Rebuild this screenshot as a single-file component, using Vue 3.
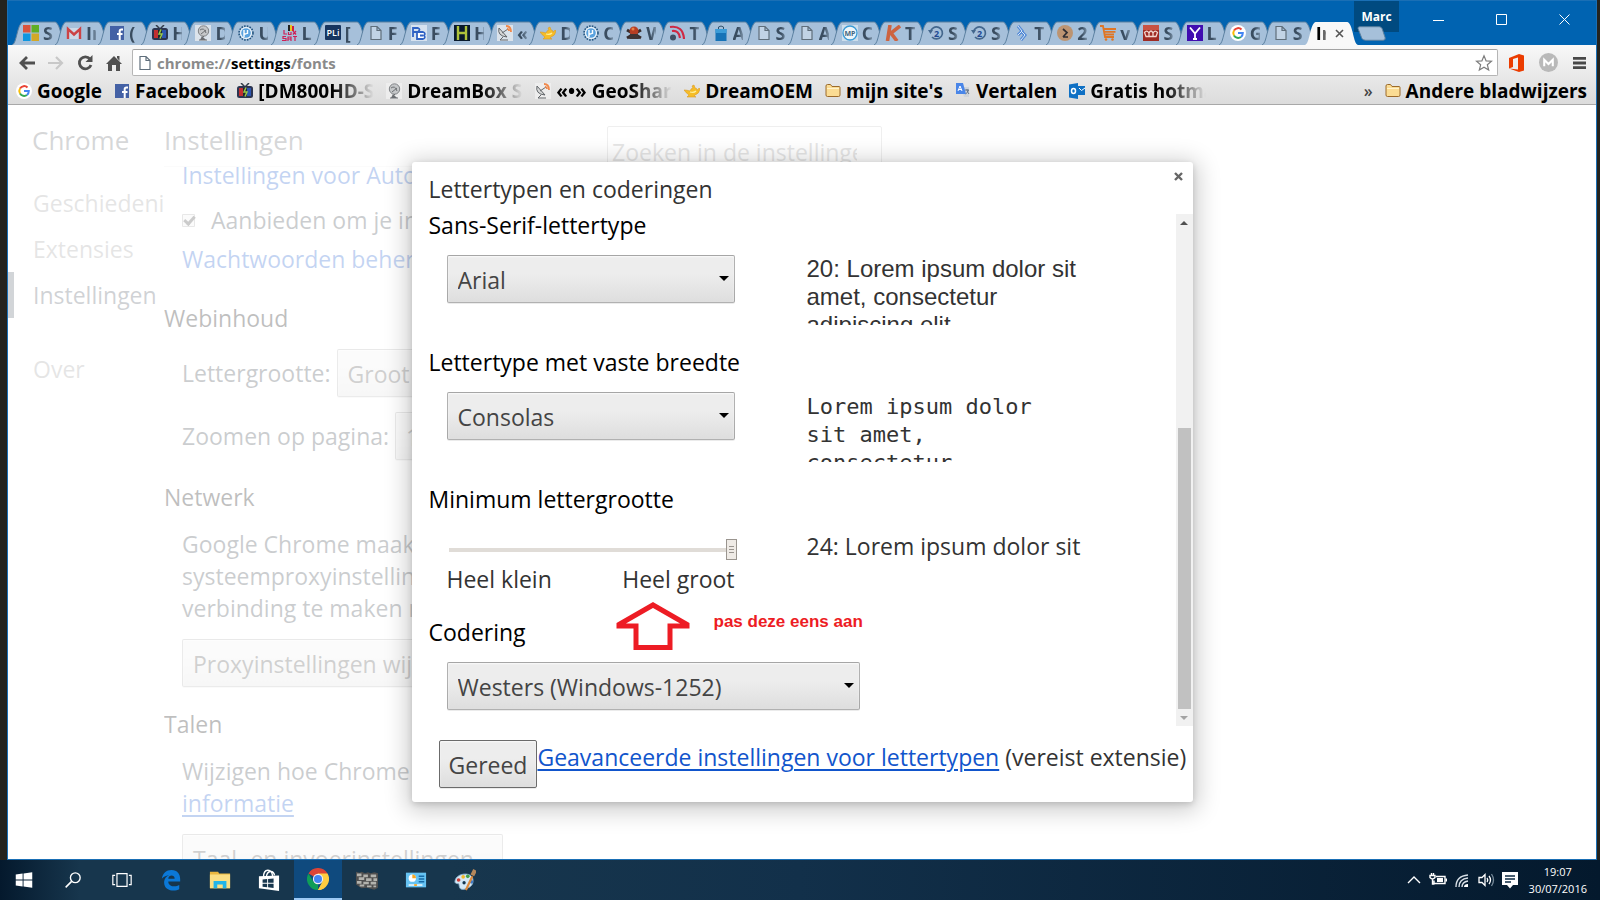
<script setup>
import { ref } from 'vue'

const tabs = [
  { icon: 'windows', title: 'S' },
  { icon: 'gmail', title: 'In' },
  { icon: 'facebook', title: '(' },
  { icon: 'tv', title: 'H' },
  { icon: 'dish', title: 'D' },
  { icon: 'gear', title: 'U' },
  { icon: 'luxsat', title: 'L' },
  { icon: 'pli', title: '[' },
  { icon: 'page', title: 'F' },
  { icon: 'board', title: 'F' },
  { icon: 'h', title: 'H' },
  { icon: 'satellite', title: '«' },
  { icon: 'lamp', title: 'D' },
  { icon: 'gear', title: 'C' },
  { icon: 'skull', title: 'W' },
  { icon: 'feed', title: 'T' },
  { icon: 'bag', title: 'A' },
  { icon: 'page', title: 'S' },
  { icon: 'page', title: 'A' },
  { icon: 'mp', title: 'C' },
  { icon: 'k', title: 'T' },
  { icon: 'history', title: 'S' },
  { icon: 'history', title: 'S' },
  { icon: 'chevrons', title: 'T' },
  { icon: 'coin', title: '2' },
  { icon: 'cart', title: 'v' },
  { icon: 'crown', title: 'S' },
  { icon: 'yahoo', title: 'L' },
  { icon: 'google', title: 'G' },
  { icon: 'page', title: 'S' }
]

const bookmarks = [
  { icon: 'google', title: 'Google' },
  { icon: 'facebook', title: 'Facebook' },
  { icon: 'tv', title: '[DM800HD-S', fade: true },
  { icon: 'dish', title: 'DreamBox Sa', fade: true },
  { icon: 'satellite', title: '«•» GeoShare', fade: true },
  { icon: 'lamp', title: 'DreamOEM' },
  { icon: 'folder', title: "mijn site's" },
  { icon: 'translate', title: 'Vertalen' },
  { icon: 'outlook', title: 'Gratis hotmail', fade: true }
]

const taskbar = [
  { icon: 't-start', label: 'Start' },
  { icon: 't-search', label: 'Zoeken' },
  { icon: 't-view', label: 'Taakweergave' },
  { icon: 't-edge', label: 'Edge' },
  { icon: 't-explorer', label: 'Verkenner' },
  { icon: 't-store', label: 'Store' },
  { icon: 't-chrome', label: 'Chrome', active: true },
  { icon: 't-wall', label: 'Firewall' },
  { icon: 't-panel', label: 'Configuratiescherm' },
  { icon: 't-paint', label: 'Paint' }
]

const tray = ['s-up', 's-battery', 's-wifi', 's-volume', 's-action']

const sansFont = ref('Arial')
const fixedFont = ref('Consolas')
const minSize = ref(24)
const encoding = ref('Westers (Windows-1252)')
</script>

<template>
  <div class="desktop">
    <svg class="sprite" aria-hidden="true">
      <symbol id="windows" viewBox="0 0 16 16">
        <path fill="#d9533c" d="M0 0h7.500v7.500H0z" /><path fill="#5fae26" d="M8.500 0H16v7.500H8.500z" />
        <path fill="#0d96e0" d="M0 8.500h7.500V16H0z" /><path fill="#d3a827" d="M8.500 8.500H16V16H8.500z" />
      </symbol>
      <symbol id="gmail" viewBox="0 0 16 16">
        <path fill="#e6eaf0" fill-opacity=".6" d="M1 3h14v11H1z" />
        <path fill="none" stroke="#cc4345" stroke-width="2.400" d="M2 14V4l6 5.500L14 4v10" />
      </symbol>
      <symbol id="facebook" viewBox="0 0 16 16">
        <rect x="1" y="1" width="14" height="14" fill="#4461a5" />
        <path fill="none" stroke="#fff" stroke-width="2" d="M14 4.500h-1.500q-1.800 0-1.800 1.800V15M8 9h5.500" />
      </symbol>
      <symbol id="tv" viewBox="0 0 16 16">
        <path fill="none" stroke="#333c48" stroke-width="1.500" d="M4 0l4 4 4-4" />
        <rect x="0" y="3" width="16" height="12" rx="2.500" fill="#2c3550" />
        <path fill="#c22f31" d="M2 5h4v8H2z" /><path fill="#1d2a2c" d="M6 5h4v8H6z" /><path fill="#2d56b0" d="M10 5h4v8h-4z" />
        <path fill="none" stroke="#9bc94a" stroke-width="1.500" d="M9 4.500L7 9h3l-2 4.500" />
      </symbol>
      <symbol id="dish" viewBox="0 0 16 16">
        <path fill="#f2f2f2" fill-opacity=".7" d="M0 0h16v16H0z" />
        <circle cx="8.500" cy="6" r="5.200" fill="#c5c7c9" stroke="#808386" />
        <path fill="none" stroke="#6c6f72" d="M5 5q4-3 6 3M6 9l5-4M9 11l-3 3M4 15h8" />
        <path fill="#6b6e72" d="M7 11l4 4H5z" />
      </symbol>
      <symbol id="gear" viewBox="0 0 16 16">
        <circle cx="8" cy="8" r="7" fill="none" stroke="#1d4f7b" stroke-width="1.500" stroke-dasharray="1.600 1.200" />
        <circle cx="8" cy="8" r="6" fill="#f2f8fc" />
        <circle cx="8" cy="8" r="4.800" fill="#5aa2de" />
        <path fill="none" stroke="#fff" stroke-width="1.400" d="M6 12V5M6 8q1 2 3.500 0V5v4" />
      </symbol>
      <symbol id="luxsat" viewBox="0 0 16 16">
        <path fill="#222" d="M6 0h2v6H6z" /><path fill="#e9c623" d="M8 0h2v6H8z" /><path fill="#d31f3c" d="M10 1h2v5h-2z" />
        <path fill="none" stroke="#cf1f55" stroke-width="1.200" d="M2 5v4h3M6.500 7v2.500h2.500V7M11 6l3 3.500M14 6l-3 3.500M4 11.500H1v2h3v2H0M6 16v-4h3v4M6 14h3M11 11.500h4M13 11.500V16" />
      </symbol>
      <symbol id="pli" viewBox="0 0 16 16">
        <rect width="16" height="15" rx="1" fill="#17355f" />
        <text x="8" y="11" text-anchor="middle" font-family="Open Sans" font-size="9" font-weight="600" fill="#fff">PLi</text>
      </symbol>
      <symbol id="page" viewBox="0 0 16 16">
        <path fill="#fff" fill-opacity=".3" stroke="#5f6e7b" stroke-width="1.200" d="M3 1.500h6L13 5.500v9H3zM9 1.500v4h4" />
      </symbol>
      <symbol id="board" viewBox="0 0 16 16">
        <path fill="#e5edf6" fill-opacity=".75" d="M0 0h16v16H0z" />
        <path fill="none" stroke="#2f62c4" stroke-width="1.800" d="M2 12V3h5q3 1 0 4H2" />
        <path fill="#fff" stroke="#2f62c4" stroke-width="1.800" d="M6 7h6q3 1 1 3.500 2 2.500-1 3.500H6zM9 10.500h3" />
      </symbol>
      <symbol id="h" viewBox="0 0 16 16">
        <path fill="#08192c" d="M0 0h16v16H0z" />
        <path fill="none" stroke="#adc23b" stroke-width="2.400" d="M4 1v14M12 1v14M4 8h8" />
      </symbol>
      <symbol id="satellite" viewBox="0 0 16 16">
        <path fill="#f2f2f2" fill-opacity=".7" d="M0 0h16v16H0z" />
        <path fill="#d7d8d8" stroke="#606468" d="M2 3q-2 8 8 9z" /><path stroke="#63676b" d="M5 8l6-4M6 12l-3 3h8" fill="none" />
        <path fill="none" stroke="#f0894c" stroke-width="1.800" d="M9 1q5 0 5 6M10 3.500q2 .5 2 2.500" />
      </symbol>
      <symbol id="lamp" viewBox="0 0 16 16">
        <path fill="#f6bd26" stroke="#dc9a22" stroke-width=".6" d="M0 7q3 0 6 1 1-3 3-3l-1-2 2-1 1 3q2 0 2 2 1 0 2-2l1 1q-1 5-5 6l-1 1 2 1H3l2-2Q2 10 0 7z" />
        <path stroke="#fff09a" stroke-width="1.200" d="M6 9q4 1 6-1" fill="none" />
      </symbol>
      <symbol id="skull" viewBox="0 0 16 16">
        <path stroke="#372c2d" stroke-width="3" d="M1 5l14 8M15 5L1 13" /><circle cx="8" cy="6" r="4.500" fill="#b73e24" /><path fill="#403536" d="M4 9h8l1 5H3z" /><circle cx="7" cy="4" r="1.500" fill="#e98246" />
      </symbol>
      <symbol id="feed" viewBox="0 0 16 16">
        <circle cx="4" cy="12.500" r="3" fill="#3f5065" />
        <path fill="none" stroke="#cf2944" stroke-width="2.200" d="M1 2q13-2 14 12M3 6q7-1 8 7" />
      </symbol>
      <symbol id="bag" viewBox="0 0 16 16">
        <path fill="none" stroke="#31516c" d="M5.500 6V2q2.500-2 5 0v3" /><path fill="#1673b7" d="M2.500 4h11v12h-11z" /><path fill="#3b9cd8" d="M2.500 4h11v4h-11z" />
      </symbol>
      <symbol id="mp" viewBox="0 0 16 16">
        <path fill="#deebf4" fill-opacity=".7" d="M0 0h16v16H0z" />
        <circle cx="8" cy="8" r="7" fill="#eef6fa" stroke="#3b9bd6" stroke-width="1.300" />
        <text x="8" y="11" text-anchor="middle" font-family="Open Sans" font-size="7" font-weight="700" fill="#44667f">MP</text>
      </symbol>
      <symbol id="k" viewBox="0 0 16 16">
        <path fill="none" stroke="#cd6340" stroke-width="3.600" d="M5 0L2.500 16M15 1L6 8l6 8" />
      </symbol>
      <symbol id="history" viewBox="0 0 16 16">
        <path fill="none" stroke="#44678d" stroke-width="1.700" d="M2.500 7a6 6 0 1 1 1.500 5" /><path fill="#44678d" d="M0 5l5 0-2.500 4z" />
        <text x="8.500" y="11.500" text-anchor="middle" font-family="Open Sans" font-size="9" font-weight="700" fill="#224a93">2</text>
      </symbol>
      <symbol id="chevrons" viewBox="0 0 16 16">
        <path fill="none" stroke="#5088d7" stroke-width="3" d="M4 1l4 5-4 4M7 6l4 4-4 5" /><path fill="none" stroke="#d9e7f5" d="M4 1l4 5-4 4M7 6l4 4-4 5" />
      </symbol>
      <symbol id="coin" viewBox="0 0 16 16">
        <circle cx="8" cy="8" r="8" fill="#bc9472" /><path fill="none" stroke="#2f2e33" stroke-width="1.700" d="M6 4l4 3.500-4 4.500M6 12h5" />
      </symbol>
      <symbol id="cart" viewBox="0 0 16 16">
        <path fill="none" stroke="#df7626" stroke-width="1.800" d="M0 1h3l2 11h9M4 4h12M4.500 6.800h11M5 9.500h9" /><circle cx="6" cy="14.500" r="1.300" fill="#df7626" /><circle cx="12.500" cy="14.500" r="1.300" fill="#df7626" />
      </symbol>
      <symbol id="crown" viewBox="0 0 16 16">
        <path fill="#9f2b24" d="M0 0h16v16H0z" /><path fill="#c85242" d="M0 0h16v5H0z" />
        <path fill="none" stroke="#f2d6cf" stroke-width="1.300" d="M3 11.500L1.500 7.500Q4 4.500 6 8q2-4 4 0 2-3.500 4.500-.5L13 11.500zM6 8v3M10 8v3" />
      </symbol>
      <symbol id="yahoo" viewBox="0 0 16 16">
        <path fill="#400db0" d="M0 0h16v16H0z" /><path fill="none" stroke="#fff" stroke-width="1.800" d="M3 2.500l5 6 5-6M8 8v6M6 14h4" />
      </symbol>
      <symbol id="google" viewBox="0 0 16 16">
        <circle cx="8" cy="8" r="8" fill="#fff" />
        <g fill="none" stroke-width="2">
          <path stroke="#ea4335" d="M4 5.500a4.800 4.800 0 0 1 7.500-1" /><path stroke="#fbbc05" d="M4 5.500a4.800 4.800 0 0 0 0 5" />
          <path stroke="#34a853" d="M4 10.500a4.800 4.800 0 0 0 7 1.500" /><path stroke="#4285f4" d="M11 12q1.800-1.500 1.800-4H8" />
        </g>
      </symbol>
      <symbol id="folder" viewBox="0 0 16 16">
        <path fill="#fbdc93" stroke="#9c6a2a" d="M1 3q0-1.500 1.500-1.500h3L7 3.500h7q1 0 1 1V12q0 1.500-1.500 1.500h-11Q1 13.500 1 12z" /><path stroke="#fff2cc" d="M2 5.500h12" />
      </symbol>
      <symbol id="translate" viewBox="0 0 16 16">
        <path fill="#cfd4da" d="M6 4h8v10H9z" /><path fill="#4a86e8" d="M1 0h7l3 11H1z" />
        <path fill="none" stroke="#fff" d="M3 8l2-5 2 5M3.500 6.500h3" /><path fill="none" stroke="#657487" d="M10 7h4M12 6v1q1 3 2 4M13.500 7q-1 3-3 4" />
      </symbol>
      <symbol id="outlook" viewBox="0 0 16 16">
        <path fill="#0f70c4" d="M0 1.500L9 0v16l-9-1.500z" /><path fill="#0f70c4" d="M9 3h7v9H9z" /><path fill="none" stroke="#fff" d="M10 5l2.500 2.500L16 5" />
        <ellipse cx="4.500" cy="8" rx="2" ry="2.500" fill="none" stroke="#fff" stroke-width="1.500" />
      </symbol>

      <symbol id="back" viewBox="0 0 18 18"><path fill="none" stroke="#505050" stroke-width="2.800" d="M17 9H4M9 3L3 9l6 6" /></symbol>
      <symbol id="forward" viewBox="0 0 18 18"><path fill="none" stroke="#c8c8c8" stroke-width="2.200" d="M1 9h13M9 3l6 6-6 6" /></symbol>
      <symbol id="reload" viewBox="0 0 18 18"><path fill="none" stroke="#505050" stroke-width="2.800" d="M14 5a6 6 0 1 0 1 6" /><path fill="#505050" d="M16.500 1v7h-7z" /></symbol>
      <symbol id="home" viewBox="0 0 18 18"><path fill="#505050" d="M9 2l8 8h-2v7h-4v-6H7v6H3v-7H1zM12 2h2.500v5L12 4z" /></symbol>
      <symbol id="star" viewBox="0 0 20 20"><path fill="#fff" stroke="#7d7d7d" stroke-width="1.300" d="M10 2l2.300 5.600 6 .4-4.600 3.900 1.500 5.900L10 14.600l-5.200 3.200 1.500-5.900L1.700 8l6-.4z" /></symbol>
      <symbol id="office" viewBox="0 0 15 18"><path fill="#eb3c00" d="M0 4L10 0l5 1.500v15L10 18 0 14.500l9 1V3.500L4 5v8l-4 1.500z" /></symbol>
      <symbol id="mega" viewBox="0 0 20 20"><circle cx="10" cy="10" r="10" fill="#b9b9b9" /><path fill="none" stroke="#fff" stroke-width="2.200" d="M5.500 14V7l4.500 4.500L14.500 7v7" /></symbol>
      <symbol id="menu" viewBox="0 0 14 14"><path stroke="#484848" stroke-width="3" d="M0 2h14M0 7h14M0 12h14" /></symbol>

      <symbol id="t-start" viewBox="0 0 24 24"><path fill="#fff" d="M3 6l7.500-1V11.500H3zM11.500 4.800L21 3.500v8h-9.500zM3 12.500h7.500V19L3 18zM11.500 12.500H21v8l-9.500-1.300z" /></symbol>
      <symbol id="t-search" viewBox="0 0 24 24"><circle cx="14.500" cy="9.500" r="5.300" fill="none" stroke="#fff" stroke-width="1.500" /><path stroke="#fff" stroke-width="1.700" d="M10.500 13.500L4 20" /></symbol>
      <symbol id="t-view" viewBox="0 0 24 24"><path fill="none" stroke="#fff" stroke-width="1.300" d="M6.500 5h11v14h-11zM4.500 7h-2.500v10h2.500M19.500 7H22v10h-2.500" /></symbol>
      <symbol id="t-edge" viewBox="0 0 24 24"><path fill="#0b78d7" d="M2 10.500C3 4.500 7 1 12.500 1 19 1 22 5.500 22 11v2.500H9c.2 6 8 6.500 12 4V22c-5 3-17 2-16.500-8 .2-3.500 2.200-6 5.500-7.300-4 .5-6.500 1.800-8 3.800zM9 10.500h7c0-4.500-6.500-4.700-7 0z" /></symbol>
      <symbol id="t-explorer" viewBox="0 0 24 24"><path fill="#eab73f" d="M1 3h9l1 2h12v16H1z" /><path fill="#fbdf84" d="M1 6h22v15H1z" /><path fill="#22b5ea" d="M5 13h14v8h-4v-4H9v4H5z" /></symbol>
      <symbol id="t-store" viewBox="0 0 24 24"><path fill="#fff" d="M1 8l22-1v17L1 21z" /><path fill="none" stroke="#fff" stroke-width="1.500" d="M6 9c0-10 9-10 10-1M9 9c1-8 8-8 9-2" /><path fill="#17364d" d="M5 11.500l5-.5v4H5zM11 11l6-.7V15h-6zM5 16h5v4l-5-.6zM11 16h6v4.700l-6-.7z" /></symbol>
      <symbol id="t-chrome" viewBox="0 0 24 24">
        <path fill="#db4437" d="M12 12L1.600 6a12 12 0 0 1 20.800 0z" /><path fill="#ffcd40" d="M12 12V6h10.400A12 12 0 0 1 12 24l5-9z" /><path fill="#0f9d58" d="M12 24A12 12 0 0 1 1.600 6L7 15l5 3z" />
        <path fill="#ffcd40" d="M17 15l-5 9c2 0 4-.5 6-2l3-6z" /><circle cx="12" cy="12" r="5.600" fill="#f1f1f1" /><circle cx="12" cy="12" r="4.400" fill="#4285f4" />
      </symbol>
      <symbol id="t-wall" viewBox="0 0 24 24">
        <path fill="#4f4f4f" d="M0 3l4 1 2-1 4 1.500 3-1 3 1 4-1 4 1v16l-4 2-8-2-6 .5L0 17z" />
        <path fill="#b2b2ad" d="M1 5h5v3H1zM8 6h5v3H8zM16 6h6v3h-6zM3 9h6v3H3zM11 10h6v3h-6zM19 10h4v3h-4zM1 13h5v3H1zM8 14h6v2.500H8zM16 14h6v3h-6zM4 17h5v2H4zM12 18h5v2h-5zM19 18h3v2h-3z" />
      </symbol>
      <symbol id="t-panel" viewBox="0 0 24 24"><path fill="#66c3f3" d="M1 4h22v16H1z" /><circle cx="8" cy="10" r="4" fill="#fff" /><path fill="#f6a623" d="M8 6a4 4 0 0 1 4 4H8z" /><path stroke="#176ba7" stroke-width="1.700" d="M15 8h6M15 11h6M15 14h6" /><path stroke="#fff" stroke-width="1.500" d="M4 17.500h15" /><path stroke="#f6a623" stroke-width="2" d="M10 17.500h3" /></symbol>
      <symbol id="t-paint" viewBox="0 0 24 24">
        <path fill="#d5e9f6" stroke="#86aecb" d="M1 14C1 8 9 4 16 6c6 2 6 10 2 13s-11 5-12 1 0-4-2-4-3-1-3-2z" />
        <circle cx="5" cy="12" r="2" fill="#cf3d37" /><circle cx="10" cy="8.500" r="2" fill="#f1b82d" /><circle cx="15" cy="8" r="2" fill="#45a147" /><circle cx="11" cy="15" r="1.800" fill="#17364d" /><circle cx="19" cy="14" r="2" fill="#3d79c9" />
        <path stroke="#dd8a3c" stroke-width="2.400" d="M13 23l7-15" /><path stroke="#b4875b" stroke-width="4.500" d="M20 7l3-6" />
      </symbol>

      <symbol id="s-up" viewBox="0 0 18 18"><path fill="none" stroke="#fff" stroke-width="1.400" d="M3 12l6-6 6 6" /></symbol>
      <symbol id="s-battery" viewBox="0 0 18 18"><path fill="none" stroke="#fff" stroke-width="1.400" d="M7 5.500h9v7H5v-3M1 4.500h5v2q-2.500 3-5 0zM2.500 2v3M4.500 2v3M3.500 8v5h2" /><path fill="#fff" d="M8 7h6v4H8zM16.500 7.500H18v3h-1.500z" /></symbol>
      <symbol id="s-wifi" viewBox="0 0 18 18"><path fill="none" stroke="#d7dfe6" stroke-width="1.400" d="M3 16Q3 5 15 4M6 16q0-8 9-9M9 16q0-5 6-6" /><path fill="#fff" d="M11 16q0-3 4-3v3z" /></symbol>
      <symbol id="s-volume" viewBox="0 0 18 18"><path fill="none" stroke="#fff" stroke-width="1.300" d="M2 6.500h3l3-3v11l-3-3H2zM10 7q1.500 2 0 4M12 5q3 4 0 8" /><path fill="none" stroke="#778a99" stroke-width="1.300" d="M14.500 3q4 6 0 12" /></symbol>
      <symbol id="s-action" viewBox="0 0 18 18"><path fill="#fff" d="M1 1h16v13h-5l-3 3.500-3-3.500H1z" /><path stroke="#0b2942" stroke-width="1.300" d="M4 5h10M4 8h10M4 11h6" /></symbol>
    </svg>

    <div class="window">
      <header class="titlebar">
        <div class="tabs">
          <div v-for="(tab, i) in tabs" :key="i" class="tab">
            <svg class="tab__shape" viewBox="0 0 55 24" preserveAspectRatio="none"><path d="M0 24C5 23 5 3 11 1H44C50 3 50 23 55 24" /></svg>
            <svg class="tab__icon"><use :href="'#' + tab.icon" /></svg>
            <span class="tab__title">{{ tab.title }}</span>
          </div>
          <div class="tab tab--active">
            <svg class="tab__shape" viewBox="0 0 55 24" preserveAspectRatio="none"><path d="M0 24C5 23 5 3 11 1H44C50 3 50 23 55 24" /></svg>
            <span class="tab__title">In</span>
            <button class="tab__close" aria-label="Tabblad sluiten"><svg viewBox="0 0 9 9"><path d="M1 1l7 7M8 1L1 8" /></svg></button>
          </div>
        </div>
        <div class="profile">
          <button class="profile__name">Marc</button>
          <button class="new-tab" aria-label="Nieuw tabblad"><svg viewBox="0 0 30 15"><path d="M1 2q0-1.500 2-1.500h20q2 0 3 2l3 9q1 3-2 3H9q-3 0-4-2z" /></svg></button>
        </div>
        <div class="controls">
          <button aria-label="Minimaliseren"><svg viewBox="0 0 11 11"><path d="M0 6.500h11" /></svg></button>
          <button aria-label="Maximaliseren"><svg viewBox="0 0 11 11"><path d="M.5.500h10v10H.5z" /></svg></button>
          <button aria-label="Sluiten"><svg viewBox="0 0 11 11"><path d="M.5.500l10 10M10.500.500l-10 10" /></svg></button>
        </div>
      </header>

      <div class="toolbar">
        <nav class="toolbar__nav">
          <button aria-label="Vorige"><svg><use href="#back" /></svg></button>
          <button aria-label="Volgende"><svg><use href="#forward" /></svg></button>
          <button aria-label="Vernieuwen"><svg><use href="#reload" /></svg></button>
          <button aria-label="Startpagina"><svg><use href="#home" /></svg></button>
        </nav>
        <div class="omnibox">
          <svg class="omnibox__page"><use href="#page" /></svg>
          <span>chrome://<b>settings</b>/fonts</span>
          <svg class="omnibox__star"><use href="#star" /></svg>
        </div>
        <div class="toolbar__extensions">
          <button aria-label="Office"><svg class="office"><use href="#office" /></svg></button>
          <button aria-label="MEGA"><svg class="mega"><use href="#mega" /></svg></button>
          <button aria-label="Menu"><svg class="menu"><use href="#menu" /></svg></button>
        </div>
      </div>

      <nav class="bookmarks">
        <a v-for="b in bookmarks" :key="b.title" href="#" class="bookmark">
          <svg><use :href="'#' + b.icon" /></svg>
          <span :class="{ fade: b.fade }">{{ b.title }}</span>
        </a>
        <span class="bookmarks__more">»</span>
        <a href="#" class="bookmark"><svg><use href="#folder" /></svg><span>Andere bladwijzers</span></a>
      </nav>

      <div class="viewport">
        <div class="page">
          <aside class="sidebar">
            <h1>Chrome</h1>
            <a href="#">Geschiedenis</a>
            <a href="#">Extensies</a>
            <a href="#" class="selected">Instellingen</a>
            <a href="#" class="about">Over</a>
          </aside>
          <main class="settings">
            <header class="settings__header">
              <h1>Instellingen</h1>
              <input type="text" placeholder="Zoeken in de instellingen" aria-label="Zoeken in de instellingen">
            </header>
            <div class="settings__scroll">
              <div class="settings__content">
                <section>
                  <a href="#">Instellingen voor Automatisch aanvullen beheren</a>
                  <label class="check"><input type="checkbox" checked><span>Aanbieden om je internetwachtwoorden op te slaan</span></label>
                  <a href="#">Wachtwoorden beheren</a>
                </section>
                <h2>Webinhoud</h2>
                <section>
                  <div class="line"><label for="size">Lettergrootte:</label><div class="select"><select id="size"><option>Groot</option></select></div></div>
                  <div class="line"><label for="zoom">Zoomen op pagina:</label><div class="select"><select id="zoom"><option>100%</option></select></div></div>
                </section>
                <h2>Netwerk</h2>
                <section>
                  <p>Google Chrome maakt gebruik van de<br>systeemproxyinstellingen van uw computer om<br>verbinding te maken met het netwerk.</p>
                  <button class="btn">Proxyinstellingen wijzigen...</button>
                </section>
                <h2>Talen</h2>
                <section>
                  <p>Wijzigen hoe Chrome talen verwerkt. Meer<br><a href="#" class="underline">informatie</a></p>
                  <button class="btn">Taal- en invoerinstellingen...</button>
                </section>
              </div>
            </div>
          </main>
        </div>

        <div class="overlay">
          <div class="dialog" role="dialog" aria-labelledby="dialog-title">
            <button class="dialog__close" aria-label="Sluiten"><svg viewBox="0 0 9 9"><path d="M1 1l7 7M8 1L1 8" /></svg></button>
            <h1 id="dialog-title">Lettertypen en coderingen</h1>
            <div class="dialog__body">
              <div class="dialog__content">
                <section>
                  <h2><label for="sans">Sans-Serif-lettertype</label></h2>
                  <div class="row">
                    <div class="select"><select id="sans" v-model="sansFont"><option>Arial</option></select></div>
                    <div class="sample sample--sans">20: Lorem ipsum dolor sit amet, consectetur adipiscing elit.</div>
                  </div>
                </section>
                <section>
                  <h2><label for="fixed">Lettertype met vaste breedte</label></h2>
                  <div class="row">
                    <div class="select"><select id="fixed" v-model="fixedFont"><option>Consolas</option></select></div>
                    <div class="sample sample--mono">Lorem ipsum dolor sit amet, consectetur adipiscing elit.</div>
                  </div>
                </section>
                <section>
                  <h2><label for="min">Minimum lettergrootte</label></h2>
                  <div class="row">
                    <div class="slider">
                      <input id="min" v-model="minSize" type="range" min="0" max="24">
                      <div class="slider__labels"><span>Heel klein</span><span>Heel groot</span></div>
                    </div>
                    <div class="sample sample--min">{{ minSize }}: Lorem ipsum dolor sit</div>
                  </div>
                </section>
                <section>
                  <h2><label for="enc">Codering</label></h2>
                  <div class="row">
                    <div class="select select--wide"><select id="enc" v-model="encoding"><option>Westers (Windows-1252)</option></select></div>
                  </div>
                </section>
              </div>
              <div class="scrollbar">
                <i class="scrollbar__up"></i>
                <div class="scrollbar__thumb"></div>
                <i class="scrollbar__down"></i>
              </div>
            </div>
            <footer>
              <button class="btn btn--focus">Gereed</button>
              <span><a href="#" class="underline">Geavanceerde instellingen voor lettertypen</a> (vereist extensie)</span>
            </footer>
            <div class="note">
              <svg viewBox="0 0 76 48"><path d="M38 3L72 22.500V24H55V45.500H21V24H4V22.500z" /></svg>
              <span>pas deze eens aan</span>
            </div>
          </div>
        </div>
      </div>
    </div>

    <footer class="taskbar">
      <button v-for="t in taskbar" :key="t.icon" class="task" :class="{ 'task--active': t.active }" :aria-label="t.label">
        <svg><use :href="'#' + t.icon" /></svg>
      </button>
      <div class="tray">
        <svg v-for="s in tray" :key="s"><use :href="'#' + s" /></svg>
        <time>19:07<br>30/07/2016</time>
      </div>
    </footer>
  </div>
</template>

<style>
html,
body {
  margin: 0;
  overflow: hidden;
}
</style>

<style scoped>
* {
  box-sizing: border-box;
}

h1,
h2,
p {
  margin: 0;
  font-weight: 400;
}

button {
  padding: 0;
  border: 0;
  background: none;
  font: inherit;
  color: inherit;
}

a {
  text-decoration: none;
}

.desktop {
  display: flex;
  flex-direction: column;
  height: 100vh;
  background: #24231e;
  font-family: "Open Sans", "Noto Sans", sans-serif;
}

.sprite {
  position: absolute;
  width: 0;
  height: 0;
}

.window {
  display: flex;
  flex: 1;
  flex-direction: column;
  min-height: 0;
  margin: 0 3px 0 7px;
  border: 1px solid #1a6fb5;
  background: #fff;
}

/* tabs */
.titlebar {
  display: flex;
  flex-shrink: 0;
  height: 44px;
  padding-left: 4px;
  background: #0063b1;
}

.tabs {
  display: flex;
  flex: 1;
  align-items: flex-end;
  min-width: 0;
}

.tab {
  position: relative;
  display: flex;
  flex: 1;
  align-items: center;
  min-width: 0;
  height: 24px;
  padding-left: 11px;
}

.tab__shape {
  position: absolute;
  top: 0;
  left: 0;
  width: calc(100% + 11px);
  height: 24px;
  fill: #a6c0da;
  stroke: #5b7f9f;
}

.tab__icon {
  position: relative;
  flex-shrink: 0;
  width: 16px;
  height: 16px;
}

.tab__title {
  position: relative;
  width: 10px;
  height: 24px;
  margin-left: 4px;
  overflow: hidden;
  font-size: 18px;
  font-weight: 700;
  line-height: 24px;
  color: #3a4d60;
  mask-image: linear-gradient(90deg, #000 50%, rgba(0, 0, 0, .4));
}

.tab--active {
  flex: 0 0 42px;
  z-index: 1;
}

.tab--active .tab__shape {
  fill: #f8f8f8;
  stroke: none;
}

.tab--active .tab__title {
  flex-shrink: 0;
  margin-left: 0;
  color: #000;
}

.tab__close {
  position: relative;
  flex-shrink: 0;
  width: 9px;
  margin-left: 9px;
  line-height: 0;
}

.tab__close svg {
  width: 9px;
  height: 9px;
  stroke: #555;
  stroke-width: 1.6;
}

.profile {
  width: 52px;
  padding-left: 7px;
}

.profile__name {
  display: block;
  width: 45px;
  height: 31px;
  background: #004a80;
  font-size: 12px;
  font-weight: 700;
  line-height: 30px;
  color: #fff;
}

.new-tab {
  position: absolute;
  top: 26px;
  margin-left: 3px;
  line-height: 0;
}

.new-tab svg {
  width: 29px;
  height: 15px;
  fill: #a6c0da;
  stroke: #5b7f9f;
}

.controls {
  display: flex;
  padding-left: 8px;
}

.controls button {
  width: 63px;
  height: 37px;
  line-height: 0;
}

.controls svg {
  width: 11px;
  height: 11px;
  fill: none;
  stroke: #fff;
}

/* toolbar */
.toolbar {
  display: flex;
  flex-shrink: 0;
  align-items: center;
  height: 32px;
  padding: 4px 10px 1px;
  background: linear-gradient(#f8f8f8, #e8e8e8);
}

.toolbar__nav {
  display: flex;
  gap: 11px;
  padding-right: 9px;
}

.toolbar button {
  line-height: 0;
}

.toolbar__nav svg {
  width: 18px;
  height: 18px;
}

.omnibox {
  display: flex;
  flex: 1;
  align-items: center;
  height: 27px;
  padding: 0 4px;
  border: 1px solid #b5b5b5;
  border-top-color: #a2a2a2;
  border-radius: 2px;
  background: #fff;
  font-size: 15px;
  font-weight: 700;
  line-height: 24px;
  color: #8a8a8a;
}

.omnibox b {
  font-weight: 700;
  color: #000;
}

.omnibox__page {
  width: 16px;
  height: 18px;
  margin-right: 4px;
}

.omnibox__star {
  width: 18px;
  height: 18px;
  margin-left: auto;
}

.toolbar__extensions {
  display: flex;
  gap: 15px;
  align-items: center;
  padding-left: 11px;
}

.office {
  width: 15px;
  height: 18px;
}

.mega {
  width: 19px;
  height: 19px;
}

.menu {
  width: 13px;
  height: 14px;
}

.bookmarks {
  display: flex;
  flex-shrink: 0;
  gap: 12px;
  align-items: center;
  height: 28px;
  padding: 0 9px 0 8px;
  border-bottom: 1px solid #a8a8a8;
  background: linear-gradient(#e8e8e8, #dcdcdc);
}

.bookmark {
  display: flex;
  gap: 5px;
  align-items: center;
  font-size: 19px;
  font-weight: 700;
  line-height: 26px;
  color: #000;
  white-space: nowrap;
}

.bookmark svg {
  flex-shrink: 0;
  width: 16px;
  height: 16px;
}

.fade {
  width: 116px;
  overflow: hidden;
  mask-image: linear-gradient(90deg, #000 65%, transparent);
}

.bookmarks__more {
  margin-left: auto;
  font-size: 16px;
  font-weight: 600;
  color: #444;
}

/* settings page */
.viewport {
  position: relative;
  flex: 1;
  min-height: 0;
  overflow: hidden;
  font-size: 23px;
  line-height: 32px;
  color: #303942;
}

.page {
  display: flex;
  height: 100%;
}

.sidebar {
  display: flex;
  flex: 0 0 156px;
  flex-direction: column;
  overflow: hidden;
}

.sidebar h1 {
  padding: 19px 0 24px 24px;
  font-size: 26px;
  color: #5c6166;
}

.sidebar a {
  padding-left: 19px;
  border-left: 6px solid transparent;
  line-height: 46px;
  color: #999;
}

.sidebar .selected {
  border-left-color: #4e5764;
  color: #464e5a;
}

.sidebar .about {
  margin-top: 28px;
}

.settings {
  display: flex;
  flex: 1;
  flex-direction: column;
  min-width: 0;
}

.settings__header {
  display: flex;
  flex-shrink: 0;
  justify-content: space-between;
  width: 718px;
  height: 62px;
  padding-top: 19px;
  border-bottom: 1px solid #eee;
}

.settings__header h1 {
  font-size: 26px;
  color: #5c6166;
}

.settings__header input {
  width: 275px;
  height: 50px;
  margin-top: 2px;
  padding: 2px 24px 0 4px;
  border: 1px solid #bfbfbf;
  border-radius: 2px;
  font: inherit;
}

.settings__header input::placeholder {
  color: #999;
}

.settings__scroll {
  flex: 1;
  min-height: 0;
  overflow: hidden;
  white-space: nowrap;
}

.settings__content {
  margin-top: -8px;
}

.settings h2 {
  margin: 21px 0 15px;
  font-size: 23px;
  color: #000;
}

.settings section {
  display: flex;
  flex-direction: column;
  gap: 15px;
  align-items: flex-start;
  padding-left: 18px;
}

.settings section:first-child {
  gap: 7px;
  padding-bottom: 6px;
}

.settings a,
.underline {
  color: #15c;
}

.settings .underline,
.underline {
  text-decoration: underline;
  text-decoration-thickness: 2px;
  text-underline-offset: 3px;
}

.check {
  display: flex;
  gap: 16px;
  align-items: center;
  padding-top: 6px;
}

.check input {
  position: relative;
  width: 13px;
  height: 13px;
  margin: 0;
  border: 1px solid rgba(0, 0, 0, .3);
  border-radius: 1px;
  background: #ededed;
  appearance: none;
}

.check input:checked::after {
  position: absolute;
  top: -1px;
  left: 3px;
  width: 4px;
  height: 8px;
  border: solid #333;
  border-width: 0 3px 3px 0;
  transform: rotate(42deg);
  content: "";
}

.line {
  display: flex;
  gap: 6px;
  align-items: center;
}

.select {
  position: relative;
  width: 288px;
}

.select--wide {
  width: 413px;
}

.select::after {
  position: absolute;
  top: 21px;
  right: 6px;
  border: 5px solid transparent;
  border-top-color: #000;
  border-bottom: 0;
  content: "";
}

.select select,
.btn {
  height: 48px;
  padding: 2px 10px 0;
  border: 1px solid rgba(0, 0, 0, .25);
  border-radius: 2px;
  background: linear-gradient(#ededed, #ededed 38%, #dedede);
  box-shadow: 0 1px 0 rgba(0, 0, 0, .08), inset 0 1px 2px rgba(255, 255, 255, .75);
  font: inherit;
  color: #444;
  appearance: none;
}

.select select {
  display: block;
  width: 100%;
}

/* fonts dialog */
.overlay {
  position: absolute;
  inset: 0;
  display: flex;
  align-items: center;
  justify-content: center;
  background: rgba(255, 255, 255, .75);
}

.dialog {
  position: relative;
  width: 781px;
  border-radius: 3px;
  background: #fff;
  box-shadow: 0 4px 23px 5px rgba(0, 0, 0, .2), 0 2px 6px rgba(0, 0, 0, .15);
  color: #333;
}

.dialog h1 {
  padding: 11px 17px 9px;
  font-size: 23px;
}

.dialog__close {
  position: absolute;
  top: 10px;
  right: 10px;
  line-height: 0;
}

.dialog__close svg {
  width: 9px;
  height: 9px;
  stroke: #666;
  stroke-width: 2.4;
}

.dialog__body {
  display: flex;
}

.dialog__content {
  flex: 1;
  padding: 0 17px 16px;
}

.dialog section + section {
  margin-top: 26px;
}

.dialog h2 {
  font-size: 23px;
  line-height: 22px;
  color: #000;
}

.row {
  display: flex;
  gap: 72px;
  padding: 19px 0 0 18px;
}

.sample {
  width: 276px;
  height: 70px;
  overflow: hidden;
  font-size: 24px;
  line-height: 28px;
}

.sample--sans {
  font-family: "Liberation Sans", sans-serif;
}

.sample--mono {
  padding-top: 1px;
  font-family: "DejaVu Sans Mono", monospace;
  font-size: 22px;
}

.sample--min {
  height: 66px;
  font-size: 23px;
  line-height: 34px;
  white-space: nowrap;
}

.slider {
  width: 290px;
  margin-right: -2px;
  padding-top: 10px;
}

.slider input {
  display: block;
  width: 288px;
  height: 21px;
  margin: 0 0 0 2px;
  background: linear-gradient(#e0dcd7, #e0dcd7) center / 100% 4px no-repeat;
  appearance: none;
}

.slider input::-webkit-slider-thumb {
  width: 11px;
  height: 21px;
  border: 1px solid #9a958f;
  background:
    linear-gradient(#99948f, #99948f) center 6px / 5px 1px no-repeat,
    linear-gradient(#99948f, #99948f) center 9px / 5px 1px no-repeat,
    linear-gradient(#99948f, #99948f) center 12px / 5px 1px no-repeat,
    #efebe6;
  appearance: none;
}

.slider__labels {
  display: flex;
  justify-content: space-between;
  padding: 8px 2px 0 0;
  line-height: 22px;
}

.scrollbar {
  display: flex;
  flex: 0 0 17px;
  flex-direction: column;
  align-items: center;
  background: #f1f1f1;
}

.scrollbar__up,
.scrollbar__down {
  width: 0;
  height: 0;
  margin: 7px 0 6px;
  border: 4px solid transparent;
}

.scrollbar__up {
  border-top: 0;
  border-bottom-color: #505050;
}

.scrollbar__down {
  border-top-color: #a3a3a3;
  border-bottom: 0;
}

.scrollbar__thumb {
  width: 13px;
  height: 281px;
  margin-top: auto;
  background: #c1c1c1;
}

.dialog footer {
  display: flex;
  align-items: flex-start;
  padding: 14px 0 14px 27px;
  white-space: nowrap;
}

.dialog footer .btn {
  padding: 2px 9px 0;
}

.dialog footer span {
  padding-top: 1px;
}

.btn--focus {
  border-color: #6b6b6b;
}

.note {
  position: absolute;
  top: 440px;
  left: 203px;
  display: flex;
  gap: 23px;
  font: 700 17px/40px "Liberation Sans", sans-serif;
  color: #ed1c24;
}

.note svg {
  width: 76px;
  height: 48px;
  fill: none;
  stroke: #ed1c24;
  stroke-width: 5;
}

/* taskbar */
.taskbar {
  display: flex;
  flex-shrink: 0;
  gap: 1px;
  height: 40px;
  background: linear-gradient(90deg, #04192d, #17364d 5%, #17364d 28%, #12304a 50%, #04192d);
  color: #fff;
}

.task {
  width: 48px;
  line-height: 0;
}

.task--active {
  border-bottom: 2px solid #9cc9f5;
  background: #0f4a7e;
}

.task svg {
  width: 22px;
  height: 22px;
}

.tray {
  display: flex;
  gap: 6px;
  align-items: center;
  margin-left: auto;
  padding-right: 13px;
}

.tray svg {
  width: 18px;
  height: 18px;
}

.tray time {
  padding-left: 4px;
  font-size: 11px;
  line-height: 17px;
  text-align: center;
}
</style>
